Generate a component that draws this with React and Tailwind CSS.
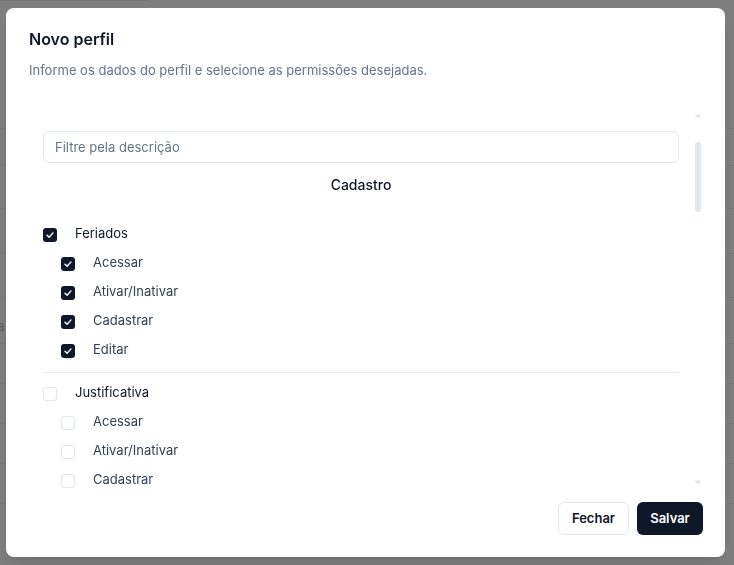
import { useState } from "react";

const GROUPS = [
  {
    name: "Feriados",
    items: ["Acessar", "Ativar/Inativar", "Cadastrar", "Editar"],
    checked: true,
  },
  {
    name: "Justificativa",
    items: ["Acessar", "Ativar/Inativar", "Cadastrar", "Editar"],
    checked: false,
  },
];

/* background table rows, dimmed under the dialog */
const ROW_HEIGHTS = [37, 43, 45, 44, 46, 40, 40, 40, 40, 40];

function Checkbox({ checked }) {
  return (
    <span
      className={
        checked
          ? "mt-[2px] flex h-[14px] w-[14px] shrink-0 items-center justify-center rounded-[3px] bg-[#0f172a]"
          : "mt-[2px] flex h-[14px] w-[14px] shrink-0 items-center justify-center rounded-[3px] border border-[#e2e8f0] bg-white"
      }
    >
      {checked && (
        <svg width="10" height="10" viewBox="0 0 10 10" fill="none">
          <path
            d="M2 5.2 L4.1 7.2 L8 2.9"
            stroke="#fff"
            strokeWidth="1.4"
            strokeLinecap="round"
            strokeLinejoin="round"
          />
        </svg>
      )}
    </span>
  );
}

function PermissionGroup({ group, first }) {
  return (
    <div className="flex flex-col">
      {!first && <div className="mt-[8px] mb-[5px] h-px bg-[#e2e8f0]" />}
      <div className="flex h-[29px] items-center gap-[18px]">
        <Checkbox checked={group.checked} />
        <span className="text-[13px] text-[#0f172a]">{group.name}</span>
      </div>
      {group.items.map((item) => (
        <div key={item} className="flex h-[29px] items-center gap-[18px] pl-[18px]">
          <Checkbox checked={group.checked} />
          <span className="text-[13px] text-[#334155]">{item}</span>
        </div>
      ))}
    </div>
  );
}

function Arrow({ up }) {
  return (
    <svg width="8" height="5" viewBox="0 0 8 5">
      <path d={up ? "M4 0.5 L7.5 4.5 L0.5 4.5 Z" : "M0.5 0.5 L7.5 0.5 L4 4.5 Z"} fill="#dde3eb" />
    </svg>
  );
}

export default function App() {
  const [filter, setFilter] = useState("");

  return (
    <div className="h-screen overflow-hidden bg-[#7f7f7f] font-['Inter',sans-serif]">
      {/* page behind the overlay */}
      <div className="h-px w-[148px] bg-[#767676]" />
      <div className="flex flex-col pt-[127px]">
        {ROW_HEIGHTS.map((h, i) => (
          <div
            key={i}
            className="flex items-center border-t border-[#777777] text-[13px] text-[#5c5c5c]"
            style={{ height: h }}
          >
            {i === 4 && <span className="-ml-[3px] mt-[12px]">a</span>}
          </div>
        ))}
      </div>

      {/* dialog */}
      <div className="fixed left-[6px] top-[8px] flex h-[549px] w-[719px] flex-col rounded-[8px] bg-white pt-[19px] pb-[22px] pl-[23px] pr-[21px] shadow-lg">
        <h2 className="text-[16px] leading-[24px] font-semibold text-[#0f172a]">Novo perfil</h2>
        <p className="mt-[9px] text-[13px] leading-[20px] text-[#64748b]">
          Informe os dados do perfil e selecione as permissões desejadas.
        </p>

        <div className="mt-[28px] flex h-[382px] shrink-0">
          <div className="flex-1 overflow-hidden pt-[23px] pl-[14px] pr-[13px]">
            <input
              value={filter}
              onChange={(e) => setFilter(e.target.value)}
              placeholder="Filtre pela descrição"
              className="h-[32px] w-full rounded-[6px] border border-[#e2e8f0] px-[11px] text-[13px] text-[#0f172a] outline-none placeholder:text-[#64748b]"
            />
            <p className="mt-[12px] text-center text-[14px] leading-[20px] font-medium text-[#0f172a]">
              Cadastro
            </p>
            <div className="mt-[24px] flex flex-col">
              {GROUPS.map((g, i) => (
                <PermissionGroup key={g.name} group={g} first={i === 0} />
              ))}
            </div>
          </div>

          {/* scrollbar */}
          <div className="flex w-[12px] flex-col items-center pt-[5px] pb-[5px]">
            <Arrow up />
            <div className="mt-[24px] h-[70px] w-[6px] rounded-full bg-[#e2e8f0]" />
            <div className="flex-1" />
            <Arrow />
          </div>
        </div>

        <div className="mt-auto flex justify-end gap-[8px] pr-[1px]">
          <button className="flex h-[33px] w-[71px] items-center justify-center rounded-[6px] border border-[#e2e8f0] bg-white text-[13px] font-semibold text-[#0f172a]">
            Fechar
          </button>
          <button className="flex h-[33px] w-[66px] items-center justify-center rounded-[6px] bg-[#0f172a] text-[13px] font-semibold text-white">
            Salvar
          </button>
        </div>
      </div>
    </div>
  );
}
